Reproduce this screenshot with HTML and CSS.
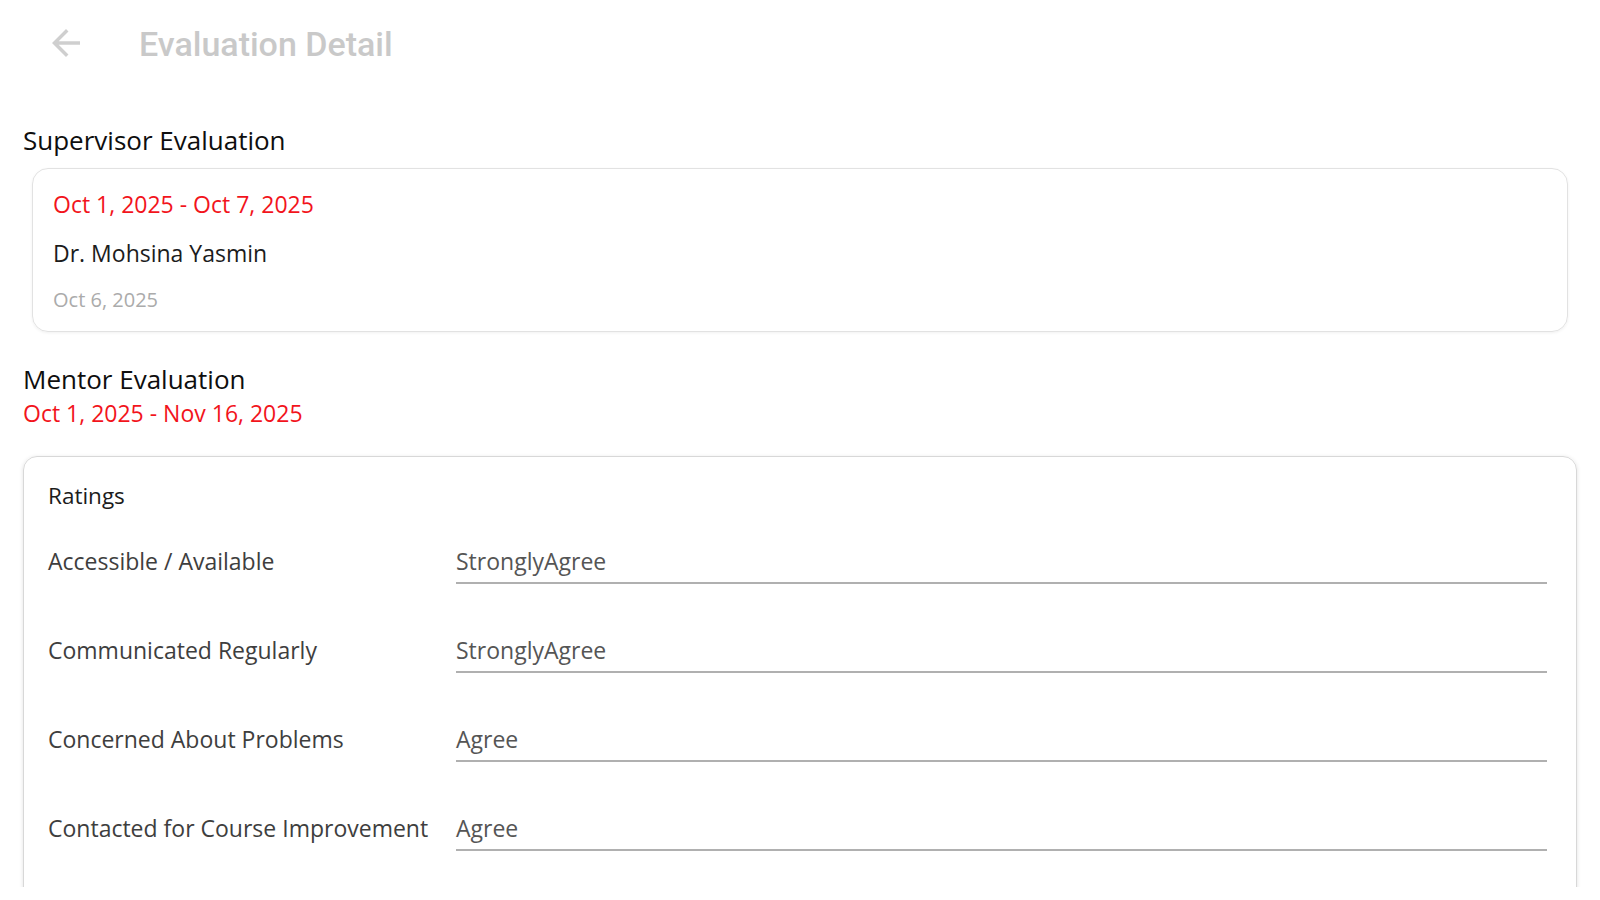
FILE: index.html
```html
<!DOCTYPE html>
<html lang="en">
<head>
<meta charset="utf-8">
<title>Evaluation Detail</title>
<link rel="stylesheet" href="styles.css">
</head>
<body>
<div class="page">
  <header class="topbar">
    <button class="back" aria-label="Back">
      <svg viewBox="0 0 24 24" width="42" height="42"><path d="M20 11H7.83l5.59-5.59L12 4l-8 8 8 8 1.41-1.41L7.83 13H20v-2z" fill="currentColor"/></svg>
    </button>
    <h1 class="title">Evaluation Detail</h1>
  </header>
  <main class="content">
    <h2 class="section-title">Supervisor Evaluation</h2>
    <div class="sup-card">
      <div class="range">Oct 1, 2025 - Oct 7, 2025</div>
      <div class="name">Dr. Mohsina Yasmin</div>
      <div class="date">Oct 6, 2025</div>
    </div>
    <h2 class="section-title mentor">Mentor Evaluation</h2>
    <div class="range">Oct 1, 2025 - Nov 16, 2025</div>
    <div class="ratings-card">
      <div class="ratings-title">Ratings</div>
      <div class="row">
        <div class="label">Accessible / Available</div>
        <div class="value">StronglyAgree</div>
      </div>
      <div class="row">
        <div class="label">Communicated Regularly</div>
        <div class="value">StronglyAgree</div>
      </div>
      <div class="row">
        <div class="label">Concerned About Problems</div>
        <div class="value">Agree</div>
      </div>
      <div class="row">
        <div class="label">Contacted for Course Improvement</div>
        <div class="value">Agree</div>
      </div>
    </div>
  </main>
</div>
</body>
</html>
```
FILE: styles.css
```css
* { box-sizing: border-box; }
html, body { margin: 0; padding: 0; background: #fff; }
body { font-family: "Open Sans", "Noto Sans", sans-serif; color: #222; }

.page { height: 887px; overflow: hidden; }

.topbar {
  height: 86px;
  display: flex;
  align-items: center;
  padding-left: 45px;
}
.back {
  border: 0; background: none; padding: 0; margin: 0;
  width: 42px; height: 42px;
  color: #cfcfcf;
  display: flex;
}
.title {
  margin: 2px 0 0 52px;
  font-family: Roboto, "Liberation Sans", sans-serif;
  font-weight: 500;
  font-size: 34px;
  line-height: 40px;
  color: #c9c9c9;
}

.content { padding: 36px 23px 0; }

.section-title {
  margin: 0;
  font-size: 26px;
  line-height: 36px;
  font-weight: 500;
  color: #0e0e0e;
}
.section-title.mentor { margin-top: 29px; }

.sup-card {
  margin: 10px 9px 0;
  border: 1px solid #e2e2e2;
  border-radius: 16px;
  padding: 19px 20px 17px;
  box-shadow: 0 1px 3px rgba(0,0,0,0.06);
}
.range {
  font-size: 23px;
  line-height: 32px;
  font-weight: 500;
  color: #f2141c;
}
.name {
  margin-top: 17px;
  font-size: 23px;
  line-height: 32px;
  font-weight: 500;
  color: #1c1c1c;
}
.date {
  margin-top: 17px;
  font-size: 20px;
  line-height: 28px;
  color: #ababab;
}

.ratings-card {
  margin-top: 27px;
  border: 1px solid #d8d8d8;
  border-radius: 14px;
  padding: 23px 29px 80px 24px;
  box-shadow: 0 1px 4px rgba(0,0,0,0.12);
}
.ratings-title {
  font-size: 22.5px;
  line-height: 32px;
  font-weight: 500;
  color: #1c1c1c;
}
.row {
  display: flex;
  align-items: flex-start;
  margin-top: 50px;
}
.ratings-title + .row { margin-top: 33px; }
.label {
  width: 408px;
  flex: none;
  font-size: 23px;
  line-height: 32px;
  color: #3e3e3e;
}
.value {
  flex: 1;
  font-size: 23px;
  line-height: 32px;
  color: #555;
  padding-bottom: 5px;
  border-bottom: 2px solid #b0b0b0;
}
```
